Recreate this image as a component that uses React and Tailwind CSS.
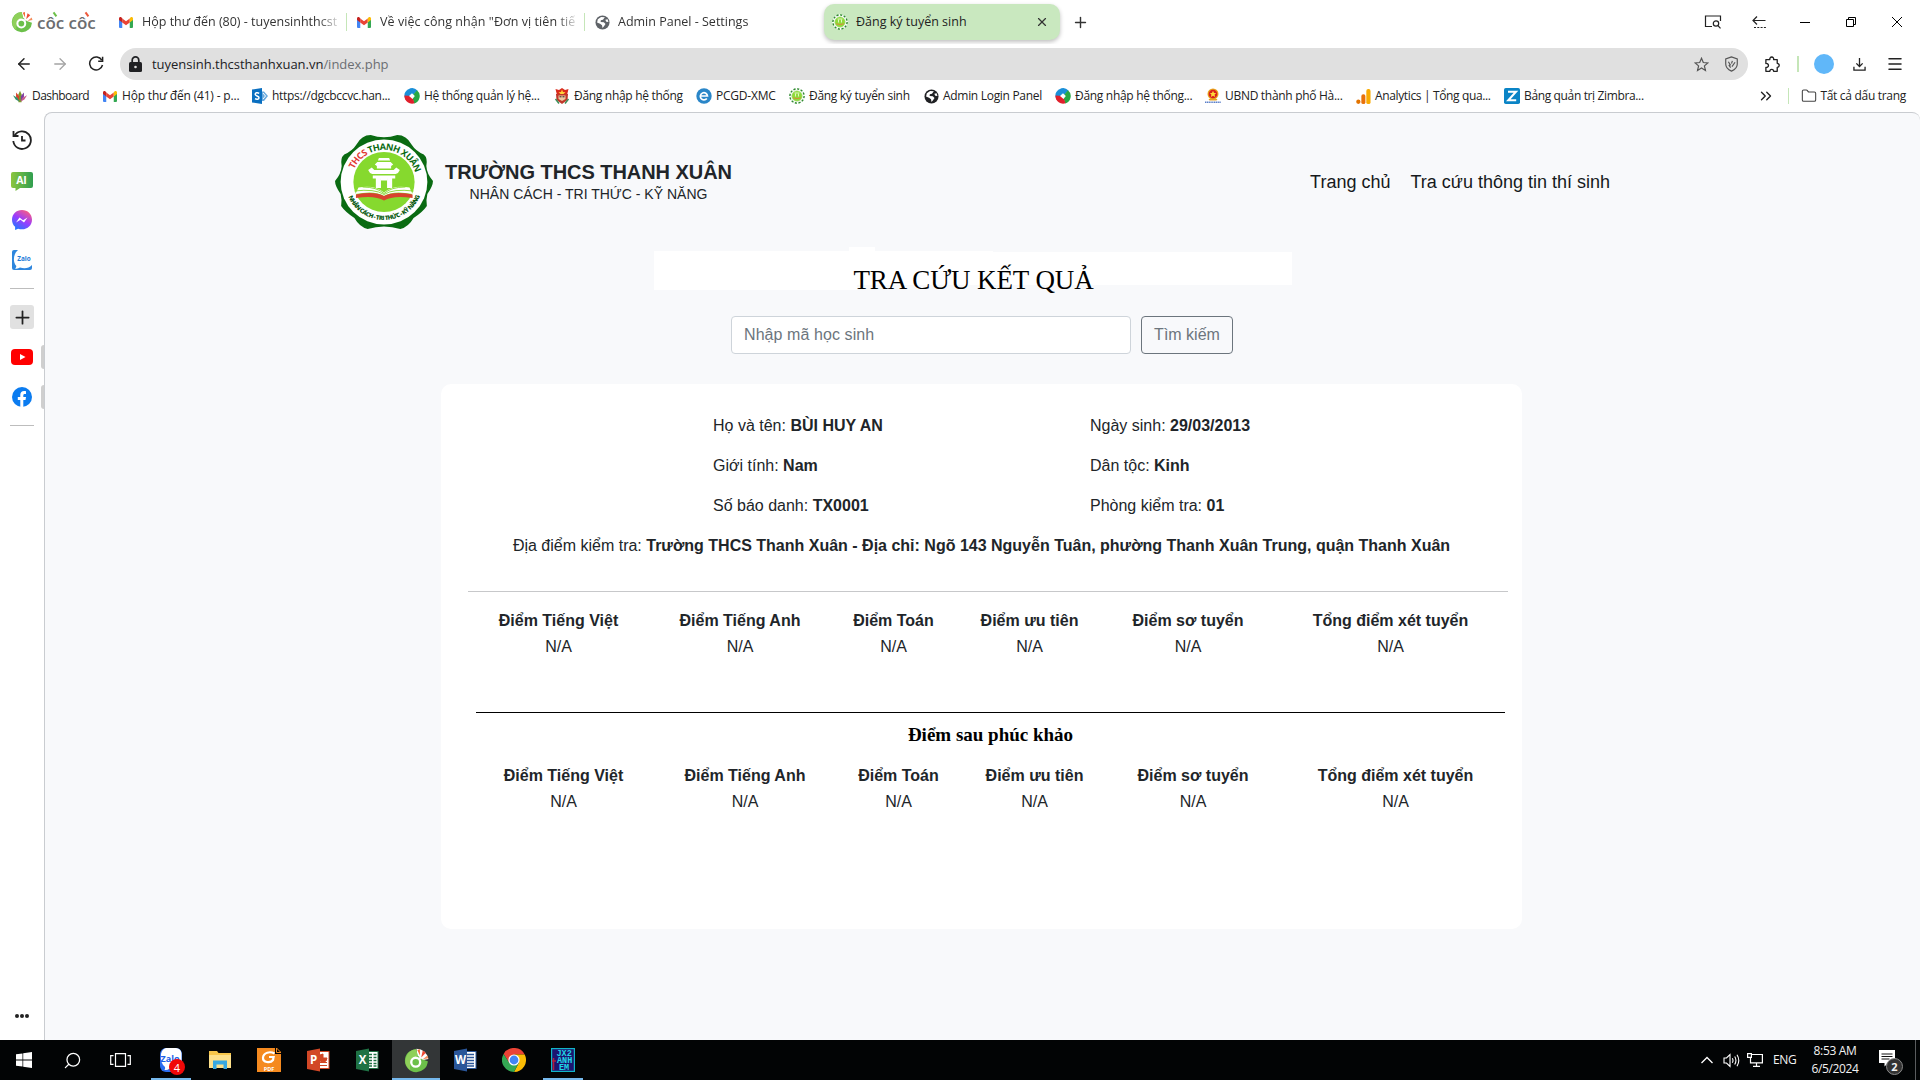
import React from "react";
import {
  ArrowLeft,
  ArrowRight,
  Menu,
  Plus,
  Search,
  X,
  Folder,
  ChevronsRight,
} from "lucide-react";

/* ---------- brand glyphs ---------- */

function Gmail({ className }) {
  return (
    <svg viewBox="0 0 28 22" className={className}>
      <path d="M0 2.5V20a2 2 0 0 0 2 2h4.5V10z" fill="#4285f4" />
      <path d="M28 2.5V20a2 2 0 0 1-2 2h-4.5V10z" fill="#34a853" />
      <path d="M6.5 11 14 16.6 21.5 11V2.8L14 8.4 6.5 2.8z" fill="#ea4335" />
      <path d="M0 2.8C0 .4 2.7-1 4.6.6L6.5 2.8V11L0 6.2z" fill="#c5221f" />
      <path d="M28 2.8C28 .4 25.300-1 23.400.6L21.500 2.800V11L28 6.200z" fill="#fbbc04" />
    </svg>
  );
}

function CocCocMark({ className }) {
  return (
    <svg viewBox="0 0 32 32" className={className}>
      <path d="M16 14.500V.8Q28 1 31.200 14L17 17z" fill="#fff" />
      <path
        d="M15.500 1.500A14.700 14.700 0 1 0 30.500 17L23 14.500 17.500 9.500z"
        fill="#6cc04a"
      />
      <path d="M15.500 1.500A14.700 14.700 0 0 0 8 28q-2-12 9.500-18.500z" fill="#8fd05a" />
      <circle cx="15" cy="18.200" r="5.700" fill="#6cc04a" stroke="#fff" strokeWidth="3" />
      <path d="m19.500 14 4.500-5" stroke="#fff" strokeWidth="2.500" />
      <path d="M17 2.500 20.300 1.500 20.500 9.500z" fill="#f26b3a" />
      <path d="M24 3.200 28 6 22 12z" fill="#ee4a34" />
      <path d="M30 9.500 31.200 13 24 14.500z" fill="#f58d5c" />
    </svg>
  );
}

function Globe({ className, color }) {
  return (
    <svg viewBox="0 0 16 16" className={className}>
      <circle cx="8" cy="8" r="7.500" fill={color} />
      <path
        d="M3 4.500 6.500 2.200 10.500 2.500 8.500 5 6.200 5.600 6 7.400 9.400 7.800 11.200 9.600 9.600 12 8 13.800 7.500 11 5.400 9.200 2.200 8zM11 5l2.500-.5.8 3-2.300-.4z"
        fill="#fff"
      />
    </svg>
  );
}

function SchoolBadge({ className }) {
  return (
    <svg viewBox="0 0 16 16" className={className}>
      <circle cx="8" cy="8" r="7.800" fill="#fff" />
      <circle cx="8" cy="8" r="7.100" fill="none" stroke="#2f8a2f" strokeWidth="1.400" strokeDasharray="2.200 1.500" />
      <circle cx="8" cy="8" r="5.300" fill="#8edb3a" stroke="#b9dfa0" strokeWidth=".6" />
      <path d="M5.500 5h5M6.500 5.500v3M9.500 5.500v3" stroke="#e9f9d0" strokeWidth=".9" />
      <path d="M4 9.800q4 1.500 8 0" stroke="#d98b3a" strokeWidth="1" fill="none" />
    </svg>
  );
}

function ColorRing({ className }) {
  return (
    <svg viewBox="0 0 16 16" className={className}>
      <path d="M.6 9.500A7.600 7.600 0 0 1 13.500 2.600L8 8z" fill="#1a8fd8" />
      <path d="M13 2.200A7.600 7.600 0 0 1 10 15.400L8 8z" fill="#27a844" />
      <path d="M10.500 15.300A7.600 7.600 0 0 1 .5 7.500L8 8z" fill="#e0202c" />
      <path d="M8 5.200 10.800 8 8.500 11 5 8z" fill="#fff" />
    </svg>
  );
}

function ZaloMark({ className }) {
  return (
    <svg viewBox="0 0 20 20" className={className}>
      <rect width="20" height="20" rx="2" fill="#2f86dd" />
      <path d="M6 0h14v15q-5 5-12 2.500-2 1.500-5 1 1.500-1 1.300-2.500C0 11 2 3 6 0z" fill="#fff" />
      <text x="12" y="11" textAnchor="middle" fontSize="6.400" fontWeight="700" fontFamily="Open Sans, sans-serif" fill="#1e7bd8">
        Zalo
      </text>
    </svg>
  );
}

function SchoolLogo() {
  return (
    <svg viewBox="0 0 98 96" preserveAspectRatio="none" className="-ml-px h-24 w-[100px] shrink-0">
      <defs>
        <path id="logo-top" d="M17 48a32 32 0 0 1 64 0" />
        <path id="logo-bottom" d="M11 48a38 38 0 0 0 76 0" />
      </defs>
      <path
        d="M36 1Q49 5.500 62 1Q71 1 76 10.500Q80 17 88 20.500Q92 24 90.500 32Q91 40 97 47Q97 52 91.500 60Q90 66 91 72Q87 78 78 84Q73 93 65 95Q49 90 33 95Q25 93 20 84Q11 78 7 72Q8 66 6.500 60Q1 52 1 47Q7 40 7.500 32Q6 24 10 20.500Q18 17 22 10.500Q27 1 36 1z"
        fill="#0a6b12"
      />
      <circle cx="49" cy="48" r="42.500" fill="#fff" />
      <circle cx="49" cy="48" r="30" fill="#86d92e" />
      <g fill="#fff">
        <path d="M44 24h10l1 2.500H43zM42.500 28h13l2.500 2.500-2 1.500v2.500H42V32l-2-1.500z" />
        <path d="M37 33.500 33.500 36q1 3 4 4h23q3-1 4-4L61 33.500 58.500 36h-19z" />
        <path d="M38 41.500h22v3H38z" />
        <path d="M41 44h5v10h-5zM52 44h5v10h-5z" />
        <path d="M46 44h6v2.500h-6z" />
        <path d="M24 53.500Q40 50.500 49 58.500 58 50.500 74 53.500L77 60Q58 56 49 62 40 56 21 60z" />
      </g>
      <path d="M20 57Q40 54.500 49 60.500 58 54.500 78 57M28 53Q42 53 49 59.500 56 53 70 53" fill="none" stroke="#86d92e" strokeWidth=".9" />
      <path d="M21.500 60.500Q40 57 49 62 58 57 77 60.500V64Q58 61 49 66.500 40 61 21.500 64z" fill="#d8432e" />
      <text fontSize="9" fontWeight="700" fontFamily="Open Sans, sans-serif">
        <textPath href="#logo-top" startOffset="13" textLength="78">
          <tspan fill="#e23a34">THCS </tspan>
          <tspan fill="#0a6b12">THANH XUÂN</tspan>
        </textPath>
      </text>
      <text fontSize="6" fontWeight="800" fontFamily="Open Sans, sans-serif" fill="#0a5a12">
        <textPath href="#logo-bottom" startOffset="15" textLength="90">
          NHÂN CÁCH - TRI THỨC - KỸ NĂNG
        </textPath>
      </text>
    </svg>
  );
}

/* ---------- browser chrome ---------- */

function Tab({ icon, children, divider }) {
  return (
    <div className="flex h-9 w-[238px] items-center">
      <div className="ml-[9px] flex w-4 justify-center">{icon}</div>
      <div className="ml-2 w-[196px] overflow-hidden text-[12.5px] leading-5 whitespace-nowrap text-[#333] [mask-image:linear-gradient(to_right,black_90%,transparent_102%)]">
        {children}
      </div>
      {divider && <div className="ml-auto h-[18px] w-[1.500px] bg-[#c5e6b8]" />}
    </div>
  );
}

function TabBar() {
  return (
    <div className="flex h-11 items-start bg-white pt-1">
      <div className="flex h-9 w-[109px] items-center pl-[11px]">
        <CocCocMark className="h-[22px] w-[22px]" />
        <span className="relative ml-1 mt-0.5 text-[17px] leading-5 font-semibold tracking-[-0.02px] whitespace-nowrap text-[#6b6d70] font-['Open_Sans',sans-serif]">
          côc côc
          <span className="absolute top-[-1px] left-[17px] h-[5px] w-[1.500px] rotate-[-35deg] bg-[#6cc04a]" />
          <span className="absolute top-[-1px] left-[49px] h-[5px] w-[1.500px] rotate-[-35deg] bg-[#ee5a3c]" />
        </span>
      </div>
      <Tab icon={<Gmail className="h-[11px] w-3.5" />} divider>
        Hộp thư đến (80) - tuyensinhthcst
      </Tab>
      <Tab icon={<Gmail className="h-[11px] w-3.5" />} divider>
        <span className="tracking-[0.06px]">Về việc công nhận "Đơn vị tiên tiế</span>
      </Tab>
      <Tab icon={<Globe className="h-[15px] w-[15px]" color="#5f6368" />}>Admin Panel - Settings</Tab>
      <div className="ml-px flex h-9 w-[236px] items-center rounded-[10px] bg-[#c9e8bf] px-2 shadow-[0_2px_4px_rgba(0,0,0,0.25)]">
        <SchoolBadge className="h-4 w-4" />
        <span className="ml-2 text-[12.5px] leading-5 text-[#222]">Đăng ký tuyển sinh</span>
        <X className="mr-[3px] ml-auto h-[14px] w-[14px] text-[#333]" strokeWidth={2} />
      </div>
      <div className="flex h-9 w-10 items-center justify-center">
        <Plus className="h-[17px] w-[17px] text-[#333]" strokeWidth={2} />
      </div>
      <div className="ml-auto flex h-9 items-center text-[#222]">
        <div className="flex w-[46px] justify-center">
          <svg viewBox="0 0 18 16" className="h-4 w-[18px]" fill="none" stroke="currentColor" strokeWidth="1.200">
            <path d="M8 12.500H1.500V2h15V7" />
            <circle cx="12" cy="9.500" r="2.700" />
            <path d="m14 11.600 2.500 2.700" />
          </svg>
        </div>
        <div className="flex w-[46px] justify-center">
          <svg viewBox="0 0 16 16" className="h-4 w-4" fill="none" stroke="currentColor" strokeWidth="1.200">
            <path d="M14.500 6.500H2M6 2.500 2 6.500 6 10.500" />
            <path d="M3 13.500h12" strokeDasharray="2 1.300" />
          </svg>
        </div>
        <div className="flex w-[46px] justify-center">
          <div className="mt-px h-px w-2.5 bg-black" />
        </div>
        <div className="flex w-[46px] justify-center">
          <svg viewBox="0 0 10 10" className="h-2.5 w-2.5" fill="none" stroke="#000" strokeWidth="1">
            <path d="M.5 2.500h7v7h-7zM2.500 2.500v-2h7v7h-2" />
          </svg>
        </div>
        <div className="flex w-[46px] justify-center">
          <svg viewBox="0 0 10 10" className="h-2.5 w-2.5" stroke="#000" strokeWidth="1">
            <path d="m0 0 10 10M10 0 0 10" />
          </svg>
        </div>
      </div>
    </div>
  );
}

function AddressBar() {
  return (
    <div className="flex h-10 items-center bg-white">
      <div className="flex w-[120px] items-center">
        <ArrowLeft className="ml-[15px] h-[18px] w-[18px] text-[#222]" strokeWidth={1.900} />
        <ArrowRight className="ml-[18px] h-[18px] w-[18px] text-[#a4a4a4]" strokeWidth={1.700} />
        <svg viewBox="0 0 16 16" className="ml-[19px] h-4 w-4" fill="none" stroke="#222" strokeWidth="1.500">
          <path d="M13.800 4.200A6.500 6.500 0 1 0 14.500 9" />
          <path d="M14.600.8v4.400h-4.400" />
        </svg>
      </div>
      <div className="flex h-8 w-[1628px] items-center rounded-full bg-[#e0e0e0] pr-[9px] pl-[9px]">
        <svg viewBox="0 0 13 16" className="h-4 w-[13px]">
          <path d="M3.200 7V4.200a3.300 3.300 0 0 1 6.600 0V7" fill="none" stroke="#202124" strokeWidth="1.700" />
          <rect y="6" width="13" height="10" rx="1.500" fill="#202124" />
          <circle cx="6.500" cy="11" r="1.300" fill="#e0e0e0" />
        </svg>
        <span className="ml-2.5 text-[13px] leading-5 tracking-[-0.02px] text-[#202124]">
          tuyensinh.thcsthanhxuan.vn<span className="text-[#6b6e72]">/index.php</span>
        </span>
        <svg viewBox="0 0 16 16" className="ml-auto h-[15px] w-[15px]" fill="none" stroke="#555" strokeWidth="1.300">
          <path d="m8 1.400 1.900 4.500 4.900.4-3.700 3.200 1.100 4.800L8 11.800l-4.200 2.500 1.100-4.800L1.200 6.300l4.900-.4z" />
        </svg>
        <svg viewBox="0 0 16 18" className="ml-[15px] h-4 w-[15px]" fill="none" stroke="#555" strokeWidth="1.300">
          <path d="M8 1 1.500 3.200V9c0 4 3 6.500 6.500 8 3.500-1.500 6.500-4 6.500-8V3.200z" />
          <path d="m4.500 6.500 2.500 4M8 8.500l1-3M8.500 12l3.500-5M5 10l2 3" />
        </svg>
      </div>
      <svg viewBox="0 0 18 18" className="ml-[16px] h-[17px] w-[17px]" fill="none" stroke="#222" strokeWidth="1.400">
        <path d="M2 3.800h4.200a2.100 2.100 0 1 1 4 0H14v4a2.100 2.100 0 1 1 0 4.200v4.200h-3.800a2 2 0 1 0-4 0H2V12a2.100 2.100 0 1 0 0-4z" strokeLinejoin="round" />
      </svg>
      <div className="ml-4 h-4 w-[1.500px] bg-[#c5e6b8]" />
      <div className="ml-[15px] h-5 w-5 rounded-full bg-[#60b7f9]" />
      <svg viewBox="0 0 14 14" className="ml-[19px] h-[13px] w-[13px]" fill="none" stroke="#222" strokeWidth="1.400">
        <path d="M7 0v9M3.600 5.800 7 9.200l3.400-3.400M1 9.500V13h12V9.500" />
      </svg>
      <Menu className="ml-[20px] h-[18px] w-[18px] text-[#222]" strokeWidth={2} />
    </div>
  );
}

function Bookmark({ icon, width, children }) {
  return (
    <div className={"flex shrink-0 items-center " + width}>
      <div className="mr-1 flex w-4 shrink-0 justify-center">{icon}</div>
      <span className="whitespace-nowrap">{children}</span>
    </div>
  );
}

function BookmarksBar() {
  return (
    <div className="flex h-7 items-center bg-white pb-1 pl-3 text-[12px] leading-5 tracking-[-0.3px] text-[#222]">
      <Bookmark
        width="w-[90px] tracking-[-0.54px]"
        icon={
          <svg viewBox="0 0 16 16" className="h-3.5 w-3.5">
            <path d="M8 2 9.800 6v9H6.200V6z" fill="#7a9c2c" />
            <path d="M3.500 4 7 8v6L3.500 9z" fill="#d8422c" />
            <path d="M12.500 4 9 8v6l3.500-5z" fill="#7d3fa0" />
            <path d="M0 7 5 10l2.500 4.500L3 12z" fill="#2f8f6a" />
            <path d="m16 7-5 3-2.500 4.500L13 12z" fill="#c85a8a" />
          </svg>
        }
      >
        Dashboard
      </Bookmark>
      <Bookmark width="w-[150px] tracking-[-0.18px]" icon={<Gmail className="h-[11px] w-3.5" />}>
        Hộp thư đến (41) - p...
      </Bookmark>
      <Bookmark
        width="w-[152px]"
        icon={
          <svg viewBox="0 0 16 16" className="h-4 w-4">
            <path d="M9 3.500 12 3.500 16 8l-4 5H9z" fill="#6aaade" />
            <path d="M0 1.500 10 0v16L0 14.500z" fill="#0a6fc0" />
            <path d="m11 5 2.500 3-2.500 3" fill="none" stroke="#fff" />
            <path d="M7.200 5.300C5.500 4.300 3.200 4.600 3.200 6.300 3.200 8.200 7 7.700 7 9.700c0 1.700-2.300 2-4 1" fill="none" stroke="#fff" strokeWidth="1.500" />
          </svg>
        }
      >
        https://dgcbccvc.han...
      </Bookmark>
      <Bookmark width="w-[150px]" icon={<ColorRing className="h-4 w-4" />}>
        Hệ thống quản lý hệ...
      </Bookmark>
      <Bookmark
        width="w-[142px]"
        icon={
          <svg viewBox="0 0 16 16" className="h-4 w-4">
            <path d="M1.500 1 5 2 8 0l3 2 3.500-1L13 7H3z" fill="#d92a1c" />
            <path d="M8 1.500 9 4l2.500.2L9.500 6H6.500L4.500 4.200 7 4z" fill="#ffd23a" />
            <path d="M2 6h12l-.5 6L8 16l-5.500-4z" fill="#c0382a" />
            <path d="M4.500 7.500h7v3.500L8 13l-3.500-2z" fill="#f0c8a0" />
            <path d="M1.500 11 5 15.500M14.500 11 11 15.500" stroke="#3d8f5a" strokeWidth="1.500" />
            <path d="M5.500 8.800h2M8.500 8.800h2" stroke="#222" />
          </svg>
        }
      >
        Đăng nhập hệ thống
      </Bookmark>
      <Bookmark
        width="w-[93px] tracking-[-0.22px]"
        icon={
          <svg viewBox="0 0 16 16" className="h-4 w-4">
            <circle cx="8" cy="8" r="7.700" fill="#2a86c8" />
            <path d="M4.300 8h7.200A3.600 3.600 0 1 0 10.800 10.500" fill="none" stroke="#fff" strokeWidth="1.700" />
          </svg>
        }
      >
        PCGD-XMC
      </Bookmark>
      <Bookmark width="w-[134px]" icon={<SchoolBadge className="h-4 w-4" />}>
        Đăng ký tuyển sinh
      </Bookmark>
      <Bookmark width="w-[132px]" icon={<Globe className="h-[15px] w-[15px]" color="#202124" />}>
        Admin Login Panel
      </Bookmark>
      <Bookmark width="w-[150px]" icon={<ColorRing className="h-4 w-4" />}>
        Đăng nhập hệ thống...
      </Bookmark>
      <Bookmark
        width="w-[150px]"
        icon={
          <svg viewBox="0 0 16 16" className="h-4 w-4">
            <circle cx="8" cy="6" r="5.500" fill="#e8a21c" />
            <circle cx="8" cy="6" r="4.300" fill="#d9201c" />
            <path d="m8 2.800 1 2.100 2.200.2-1.600 1.500.5 2.300L8 7.700 5.900 8.900l.5-2.300-1.600-1.500 2.200-.2z" fill="#ffd83a" />
            <path d="M3.500 11h9l-1 1.500h-7z" fill="#e8a21c" />
            <path d="M0 14.200h16" stroke="#5b7fc8" strokeWidth="1.600" strokeDasharray="1.300 .5" />
          </svg>
        }
      >
        UBND thành phố Hà...
      </Bookmark>
      <Bookmark
        width="w-[149px] tracking-[-0.36px]"
        icon={
          <svg viewBox="0 0 16 16" className="h-[15px] w-[15px]">
            <rect x="11" y="0" width="4.500" height="16" rx="2" fill="#f9ab00" />
            <rect x="5.700" y="5.500" width="4.300" height="10.500" rx="2" fill="#e8710a" />
            <circle cx="2.500" cy="13.600" r="2.300" fill="#e37400" />
          </svg>
        }
      >
        Analytics | Tổng qua...
      </Bookmark>
      <Bookmark
        width="w-[150px] tracking-[-0.36px]"
        icon={
          <svg viewBox="0 0 16 16" className="h-4 w-4">
            <rect width="16" height="16" rx="1.800" fill="#0a84c6" />
            <path d="M4 3.800h8L4.300 12.200H12.200" fill="none" stroke="#fff" strokeWidth="2" />
          </svg>
        }
      >
        Bảng quản trị Zimbra...
      </Bookmark>
      <div className="ml-auto flex items-center pr-[14px]">
        <ChevronsRight className="h-[18px] w-[18px] text-[#222]" strokeWidth={1.800} />
        <div className="ml-[13px] h-4 w-[1.500px] bg-[#c5e6b8]" />
        <Folder className="ml-3 h-4 w-4 text-[#444]" strokeWidth={1.600} />
        <span className="ml-[3px] whitespace-nowrap">Tất cả dấu trang</span>
      </div>
    </div>
  );
}

function SideSlot({ children, open }) {
  return (
    <div className="relative flex h-10 w-11 items-center justify-center">
      {children}
      {open && <div className="absolute top-2 right-0 h-6 w-[3px] rounded-l bg-[#cfcfcf]" />}
    </div>
  );
}

function Sidebar() {
  return (
    <aside className="flex w-11 shrink-0 flex-col items-center bg-white pt-2">
      <SideSlot>
        <svg viewBox="0 0 20 20" className="h-5 w-5" fill="none" stroke="#222" strokeWidth="1.800">
          <path d="M2.600 5.500A8.800 8.800 0 1 1 1.300 11" />
          <path d="M1.500 1v5H6.500M10 6v4.500h3.500" />
        </svg>
      </SideSlot>
      <SideSlot>
        <svg viewBox="0 0 22 19" className="mt-0.5 h-[19px] w-[22px]">
          <defs>
            <linearGradient id="ai" x1="0" x2="1">
              <stop offset="0" stopColor="#8cc63f" />
              <stop offset="1" stopColor="#2f9e50" />
            </linearGradient>
          </defs>
          <path d="M2 0h18a2 2 0 0 1 2 2v12a2 2 0 0 1-2 2H9l-4.500 3V16H2a2 2 0 0 1-2-2V2a2 2 0 0 1 2-2z" fill="url(#ai)" />
          <text x="10.500" y="12" textAnchor="middle" fontSize="10.500" fontWeight="700" fontFamily="Open Sans, sans-serif" fill="#fff">
            AI
          </text>
        </svg>
      </SideSlot>
      <SideSlot>
        <svg viewBox="0 0 20 20" className="h-5 w-5">
          <defs>
            <linearGradient id="msg" x1="0.200" y1="1" x2="0.800" y2="0">
              <stop offset="0" stopColor="#1a7cff" />
              <stop offset=".5" stopColor="#9a3cff" />
              <stop offset="1" stopColor="#ff5f7a" />
            </linearGradient>
          </defs>
          <path d="M10 0C4.300 0 0 4.200 0 9.700c0 2.900 1.200 5.400 3.100 7.100V20l3-1.300c1.200.4 2.500.6 3.900.6 5.700 0 10-4.100 10-9.600S15.700 0 10 0z" fill="url(#msg)" />
          <path d="m4 12.500 3.500-5 3.500 2.700 4.500-2.700-3.500 5-3.500-2.700z" fill="#fff" />
        </svg>
      </SideSlot>
      <SideSlot>
        <ZaloMark className="h-5 w-5" />
      </SideSlot>
      <div className="my-2 h-px w-6 bg-[#bdbdbd]" />
      <SideSlot>
        <div className="flex h-6 w-6 items-center justify-center rounded-[3px] bg-[#e1e1e1]">
          <Plus className="h-[21px] w-[21px] text-[#222]" strokeWidth={2} />
        </div>
      </SideSlot>
      <SideSlot open>
        <svg viewBox="0 0 22 16" className="h-4 w-[22px]">
          <rect width="22" height="16" rx="4" fill="#f00" />
          <path d="m9 5 5.500 3L9 11z" fill="#fff" />
        </svg>
      </SideSlot>
      <SideSlot open>
        <svg viewBox="0 0 20 20" className="h-5 w-5">
          <circle cx="10" cy="10" r="10" fill="#0b7cf0" />
          <path d="M8.300 19.900V13H5.800v-3h2.500V8c0-2.600 1.500-3.900 3.700-3.900.9 0 2 .2 2 .2V7h-1.200c-1.200 0-1.500.7-1.500 1.500V10h2.700l-.5 3h-2.200v6.900z" fill="#fff" />
        </svg>
      </SideSlot>
      <div className="mt-2 h-px w-6 bg-[#bdbdbd]" />
      <div className="mt-auto mb-[22px] flex gap-px">
        <span className="h-1 w-1 rounded-full bg-[#222]" />
        <span className="h-1 w-1 rounded-full bg-[#222]" />
        <span className="h-1 w-1 rounded-full bg-[#222]" />
      </div>
    </aside>
  );
}

/* ---------- page ---------- */

const SUBJECTS = [
  "Điểm Tiếng Việt",
  "Điểm Tiếng Anh",
  "Điểm Toán",
  "Điểm ưu tiên",
  "Điểm sơ tuyển",
  "Tổng điểm xét tuyển",
];

function ScoreTable({ className }) {
  return (
    <div className={"grid w-[1040px] grid-cols-[182px_181px_126px_146px_171px_234px] text-center leading-[26px] " + className}>
      {SUBJECTS.map((s) => (
        <div key={s}>
          <div className="font-bold">{s}</div>
          <div>N/A</div>
        </div>
      ))}
    </div>
  );
}

function Field({ label, value }) {
  return (
    <div className="whitespace-nowrap">
      {label}: <b>{value}</b>
    </div>
  );
}

function Page() {
  return (
    <main className="flex-1 rounded-tl-lg rounded-tr-lg border-t border-l border-[#c9ccd0] bg-[#f8f9fb] pr-px font-['Liberation_Sans',Arial,sans-serif] text-base leading-6 text-[#212529]">
      <header className="ml-[290px] flex h-[137px] w-[1275px] items-center">
        <SchoolLogo />
        <div className="ml-[11px] text-center">
          <div className="text-[20px] leading-6 font-bold tracking-[-0.05px]">TRƯỜNG THCS THANH XUÂN</div>
          <div className="text-[14px] leading-5">NHÂN CÁCH - TRI THỨC - KỸ NĂNG</div>
        </div>
        <nav className="ml-auto flex gap-5 pt-0.5 text-[18px] leading-[27px] text-[#16191c]">
          <a>Trang chủ</a>
          <a>Tra cứu thông tin thí sinh</a>
        </nav>
      </header>

      <div className="relative ml-[396px] h-[66px] w-[1080px]">
        <div className="absolute top-[-3px] left-[408px] h-5 w-[26px] bg-white" />
        <div className="absolute top-px left-[213px] h-[39px] w-[203px] bg-white" />
        <div className="absolute top-px left-[416px] h-[34px] w-[136px] bg-white" />
        <div className="absolute top-[2px] left-[552px] h-[33px] w-[299px] bg-white" />
        <h1 className="relative pt-[15px] pr-[15px] text-center font-['Liberation_Serif',serif] text-[27px] leading-[30px] tracking-[-0.1px] text-black">
          TRA CỨU KẾT QUẢ
        </h1>
      </div>

      <div className="flex justify-center gap-2.5">
        <div className="h-[38px] w-[400px] rounded border border-[#ced4da] bg-white px-3 py-1.5 tracking-[0.08px] text-[#6c757d]">
          Nhập mã học sinh
        </div>
        <button className="h-[38px] w-[92px] rounded border border-[#6c757d] text-center leading-6 whitespace-nowrap text-[#6c757d]">
          Tìm kiếm
        </button>
      </div>

      <section className="mt-[30px] ml-[396px] h-[545px] w-[1081px] rounded-[10px] bg-white pt-[30px]">
        <div className="ml-[272px] grid grid-cols-[377px_1fr] gap-y-4">
          <Field label="Họ và tên" value="BÙI HUY AN" />
          <Field label="Ngày sinh" value="29/03/2013" />
          <Field label="Giới tính" value="Nam" />
          <Field label="Dân tộc" value="Kinh" />
          <Field label="Số báo danh" value="TX0001" />
          <Field label="Phòng kiểm tra" value="01" />
        </div>
        <div className="mt-4 text-center">
          <Field
            label="Địa điểm kiểm tra"
            value="Trường THCS Thanh Xuân - Địa chỉ: Ngõ 143 Nguyễn Tuân, phường Thanh Xuân Trung, quận Thanh Xuân"
          />
        </div>
        <div className="mt-[33px] ml-[27px] h-px w-[1040px] bg-[#c7c8ca]" />
        <ScoreTable className="mt-[16px] ml-[26.500px]" />
        <div className="mt-[52px] ml-[35px] h-px w-[1029px] bg-black" />
        <h2 className="mt-[10px] ml-[18px] text-center font-['Liberation_Serif',serif] text-[19px] leading-6 font-bold text-black">
          Điểm sau phúc khảo
        </h2>
        <ScoreTable className="mt-[16px] ml-[31.500px]" />
      </section>
    </main>
  );
}

/* ---------- taskbar ---------- */

function Task({ children, active, open }) {
  return (
    <div className={"relative flex h-10 w-12 items-center justify-center " + (active ? "bg-[#333637]" : "")}>
      {children}
      {(active || open) && (
        <div className={"absolute bottom-0 left-1/2 h-[2px] -translate-x-1/2 bg-[#76b9ed] " + (active ? "w-12" : "w-10")} />
      )}
    </div>
  );
}

function Office({ letter, color, kind }) {
  return (
    <svg viewBox="0 0 24 24" className="h-6 w-6">
      <rect x="11" y="3.500" width="12" height="17" fill="#fff" stroke={color} strokeWidth="1" />
      {kind === "ppt" && <path d="M14 14.500h7M14 17.500h7M17 6v4h4a4 4 0 1 1-4-4z" fill={color} stroke={color} strokeWidth="1" />}
      {kind === "xls" && <path d="M14 6.500h3M14 9.500h3M14 12.500h3M14 15.500h3M14 18h3M18.500 6.500h3M18.500 9.500h3M18.500 12.500h3M18.500 15.500h3M18.500 18h3" stroke={color} strokeWidth="1.600" />}
      {kind === "doc" && <path d="M14 6.500h7M14 9.500h7M14 12.500h7M14 15.500h7M14 18h7" stroke={color} strokeWidth="1.400" />}
      <path d="M1 3 14 .5v23L1 21z" fill={color} />
      <text x="7.500" y="16.200" textAnchor="middle" fontSize="11.500" fontWeight="700" fontFamily="Open Sans, sans-serif" fill="#fff">
        {letter}
      </text>
    </svg>
  );
}

function Taskbar() {
  return (
    <footer className="flex h-10 shrink-0 bg-[#020405] text-[12px] text-[#f2f2f2]">
      <div className="mr-[3px] flex">
        <Task>
          <svg viewBox="0 0 16 16" className="h-4 w-4" fill="#fff">
            <path d="M0 2.300 6.500 1.400v6.200H0zM7.200 1.300 16 0v7.600H7.200zM0 8.400h6.500v6.200L0 13.700zM7.200 8.400H16V16l-8.800-1.300z" />
          </svg>
        </Task>
        <Task>
          <Search className="h-[19px] w-[19px] -scale-x-100 text-white" strokeWidth={1.600} />
        </Task>
        <Task>
          <svg viewBox="0 0 21 14" className="h-3.5 w-[21px]" fill="none" stroke="#fff" strokeWidth="1.200">
            <path d="M5.500.6h10v12.800h-10zM3.500 2.600H.7v8.800h2.800M17.500 2.600h2.800v8.800h-2.800" />
          </svg>
        </Task>
      </div>
      <div className="flex gap-px">
        <Task open>
          <div className="relative">
            <svg viewBox="0 0 24 24" className="h-6 w-6">
              <rect x="1" width="22" height="24" rx="6" fill="#2a6df0" />
              <path d="M7 0h10a6 6 0 0 1 5.500 5v11q-4 5-12 4.500-2 2-5 1.500 1-1.500.5-3Q1 15 2 6q1-5 5-6z" fill="#fff" />
              <text x="11" y="13.500" textAnchor="middle" fontSize="9" fontWeight="700" fontFamily="Open Sans, sans-serif" fill="#1d62e8">
                Zalo
              </text>
            </svg>
            <span className="absolute top-[11px] left-[10px] flex h-4 w-4 items-center justify-center rounded-full bg-[#f00808] text-[11px] leading-none text-white">
              4
            </span>
          </div>
        </Task>
        <Task>
          <svg viewBox="0 0 22 20" className="h-5 w-[22px]">
            <path d="M0 1h8l1.500 2H22v15H0z" fill="#f7c64a" />
            <path d="M0 5h22v13H0z" fill="#fde08a" />
            <path d="M4 10.500h14V19h-3.500v-4.500h-7V19H4z" fill="#38a8e0" />
          </svg>
        </Task>
        <Task>
          <svg viewBox="0 0 24 24" className="h-6 w-6">
            <path d="M0 0h18v6h6v18H0z" fill="#f58a1f" />
            <path d="M19.500 0v4.500H24z" fill="#020405" stroke="#f58a1f" strokeWidth="1" />
            <path d="M17.500 5.500C13 3 6.500 4.500 6 9.500c-.4 5.200 7.500 6 10 2.500l.6-3H12" fill="none" stroke="#fff" strokeWidth="2.200" />
            <text x="12" y="22.500" textAnchor="middle" fontSize="5.500" fontWeight="700" fontFamily="Open Sans, sans-serif" fill="#fff">
              PDF
            </text>
          </svg>
        </Task>
        <Task>
          <Office letter="P" color="#d24726" kind="ppt" />
        </Task>
        <Task>
          <Office letter="X" color="#1f7244" kind="xls" />
        </Task>
        <Task active>
          <CocCocMark className="h-[25px] w-[25px]" />
        </Task>
        <Task>
          <Office letter="W" color="#2a5699" kind="doc" />
        </Task>
        <Task>
          <svg viewBox="0 0 24 24" className="h-6 w-6">
            <path d="M12 6.500h10.700A12 12 0 0 0 1.600 6l5.600 9z" fill="#ea4335" />
            <path d="M12 6.500h10.700A12 12 0 0 1 12 24l4.800-9.200z" fill="#fbbc05" />
            <path d="M1.600 6A12 12 0 0 0 12 24l4.800-9.200H7.200z" fill="#34a853" />
            <circle cx="12" cy="12" r="5.600" fill="#fff" />
            <circle cx="12" cy="12" r="4.400" fill="#4285f4" />
          </svg>
        </Task>
        <Task open>
          <svg viewBox="0 0 24 24" className="h-6 w-6" fontFamily="Liberation Mono, monospace" fontWeight="700" fontSize="8.500">
            <rect x=".6" y=".6" width="22.800" height="22.800" fill="#1c1470" stroke="#12b5c8" strokeWidth="1.200" />
            <path d="M2.500 10v12M1 13h4" stroke="#b01c3c" strokeWidth="1.600" />
            <text x="5.500" y="7.800" fill="#1fd8e8">JX2</text>
            <text x="6" y="15" fill="#1fd8e8">ANH</text>
            <text x="8" y="22.300" fill="#1fd8e8">EM</text>
          </svg>
        </Task>
      </div>

      <div className="ml-auto flex items-center">
        <svg viewBox="0 0 12 8" className="h-2 w-3" fill="none" stroke="#fff" strokeWidth="1.300">
          <path d="m.5 7 5.500-5.500L11.500 7" />
        </svg>
        <svg viewBox="0 0 17 15" className="ml-[10px] h-[15px] w-[17px]" fill="none" stroke="#fff" strokeWidth="1.100">
          <path d="M1 5h2.500L7 1.500v12L3.500 10H1zM9.300 5.200q1.400 2.300 0 4.600M11.700 3.500q2.500 4 0 8M14 1.800q3.600 5.700 0 11.400" />
        </svg>
        <svg viewBox="0 0 16 14" className="ml-[7px] h-3.5 w-4" fill="none" stroke="#fff" strokeWidth="1.200">
          <path d="M5 1.500h10.400v8.300H3.500V5M9.500 9.800v3.400M6 13.300h7M.6.600h3.800v3.800H.6z" />
        </svg>
        <span className="ml-[10px] w-6 tracking-[-0.3px]">ENG</span>
        <div className="ml-[12px] w-[52px] text-center leading-[18px] tracking-[-0.35px]">
          <div>8:53 AM</div>
          <div>6/5/2024</div>
        </div>
        <div className="relative ml-[18px] h-4 w-4">
          <svg viewBox="0 0 16 17" className="mt-[-2px] h-[17px] w-4">
            <path d="M0 0h16v13H9l-3.500 3.500V13H0z" fill="#fff" />
            <path d="M2.500 4h11M2.500 6.500h11M2.500 9h8" stroke="#111" />
          </svg>
          <span className="absolute top-[6px] left-[7px] flex h-[17px] w-[17px] items-center justify-center rounded-full border border-[#8a8a8a] bg-[#333] text-[11px] leading-none font-bold">
            2
          </span>
        </div>
        <div className="mr-1 ml-[20px] h-10 w-px bg-[#5a5c5e]" />
      </div>
    </footer>
  );
}

export default function App() {
  return (
    <div className="flex h-[1080px] w-[1920px] flex-col overflow-hidden bg-white font-['Open_Sans','Noto_Sans',sans-serif]">
      <TabBar />
      <AddressBar />
      <BookmarksBar />
      <div className="flex min-h-0 flex-1">
        <Sidebar />
        <Page />
      </div>
      <Taskbar />
    </div>
  );
}
